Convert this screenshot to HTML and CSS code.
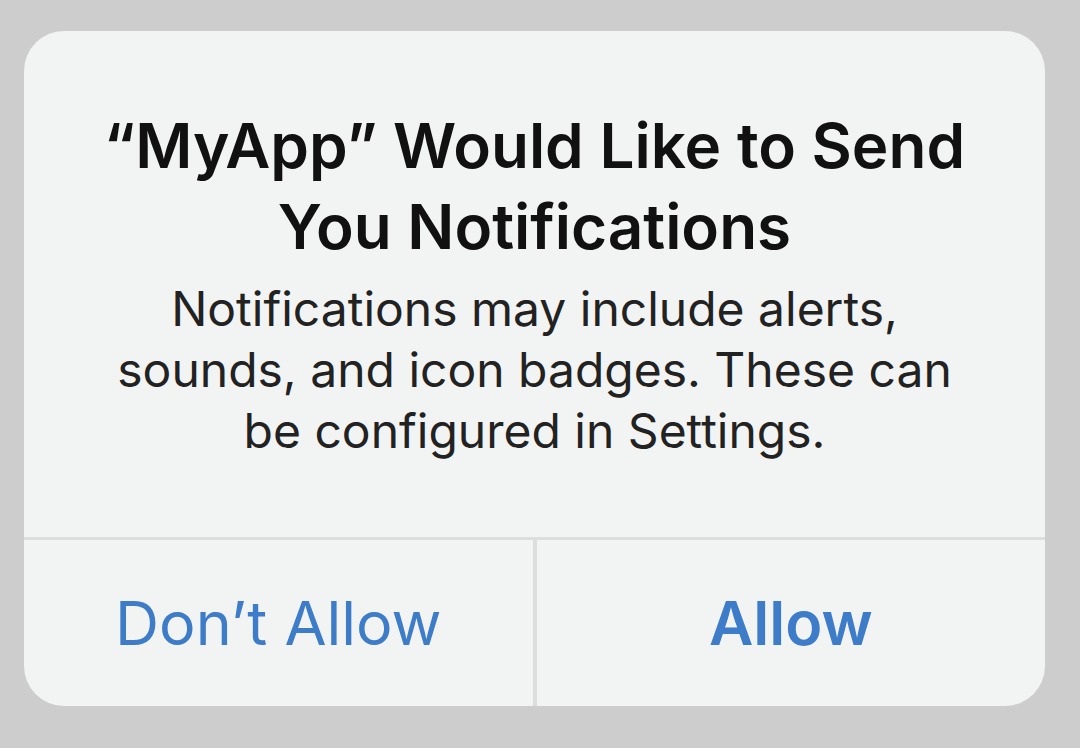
FILE: index.html
```html
<!DOCTYPE html>
<html>
<head>
    <title>Notifications</title>
    <link rel="stylesheet" href="styles.css">
</head>
<body>
    <div class="alert">
        <div class="alert-body">
            <h2 class="alert-title">“MyApp” Would Like to Send You Notifications</h2>
            <p class="alert-message">Notifications may include alerts, sounds, and icon badges. These can be configured in Settings.</p>
        </div>
        <div class="alert-actions">
            <button type="button" class="action">Don’t Allow</button>
            <button type="button" class="action action-primary">Allow</button>
        </div>
    </div>
</body>
</html>
```

FILE: styles.css
```css
body {
    font-family: 'Inter', 'Noto Sans', sans-serif;
    margin: 0;
    padding: 31px 0 0 24px;
    background-color: #cdcdcd;
    color: #111;
}
.alert {
    width: 1021px;
    height: 675px;
    background-color: #f2f3f3;
    border-radius: 40px;
    display: flex;
    flex-direction: column;
    overflow: hidden;
}
.alert-body {
    height: 509px;
    padding: 74px 40px 0;
    box-sizing: border-box;
    text-align: center;
    border-bottom: 3px solid #dcdddd;
}
.alert-title {
    margin: 0;
    font-size: 62px;
    font-weight: 600;
    line-height: 81px;
}
.alert-message {
    max-width: 850px;
    margin: 11px auto 0;
    font-size: 48px;
    line-height: 61px;
    color: #222;
}
.alert-actions {
    flex: 1;
    display: flex;
}
.action {
    flex: 1;
    background: none;
    border: none;
    font-family: inherit;
    font-size: 61px;
    color: #3d7cc9;
    padding: 0;
    cursor: pointer;
}
.action + .action {
    border-left: 4px solid #dcdddd;
}
.action-primary {
    font-weight: 600;
}
```
